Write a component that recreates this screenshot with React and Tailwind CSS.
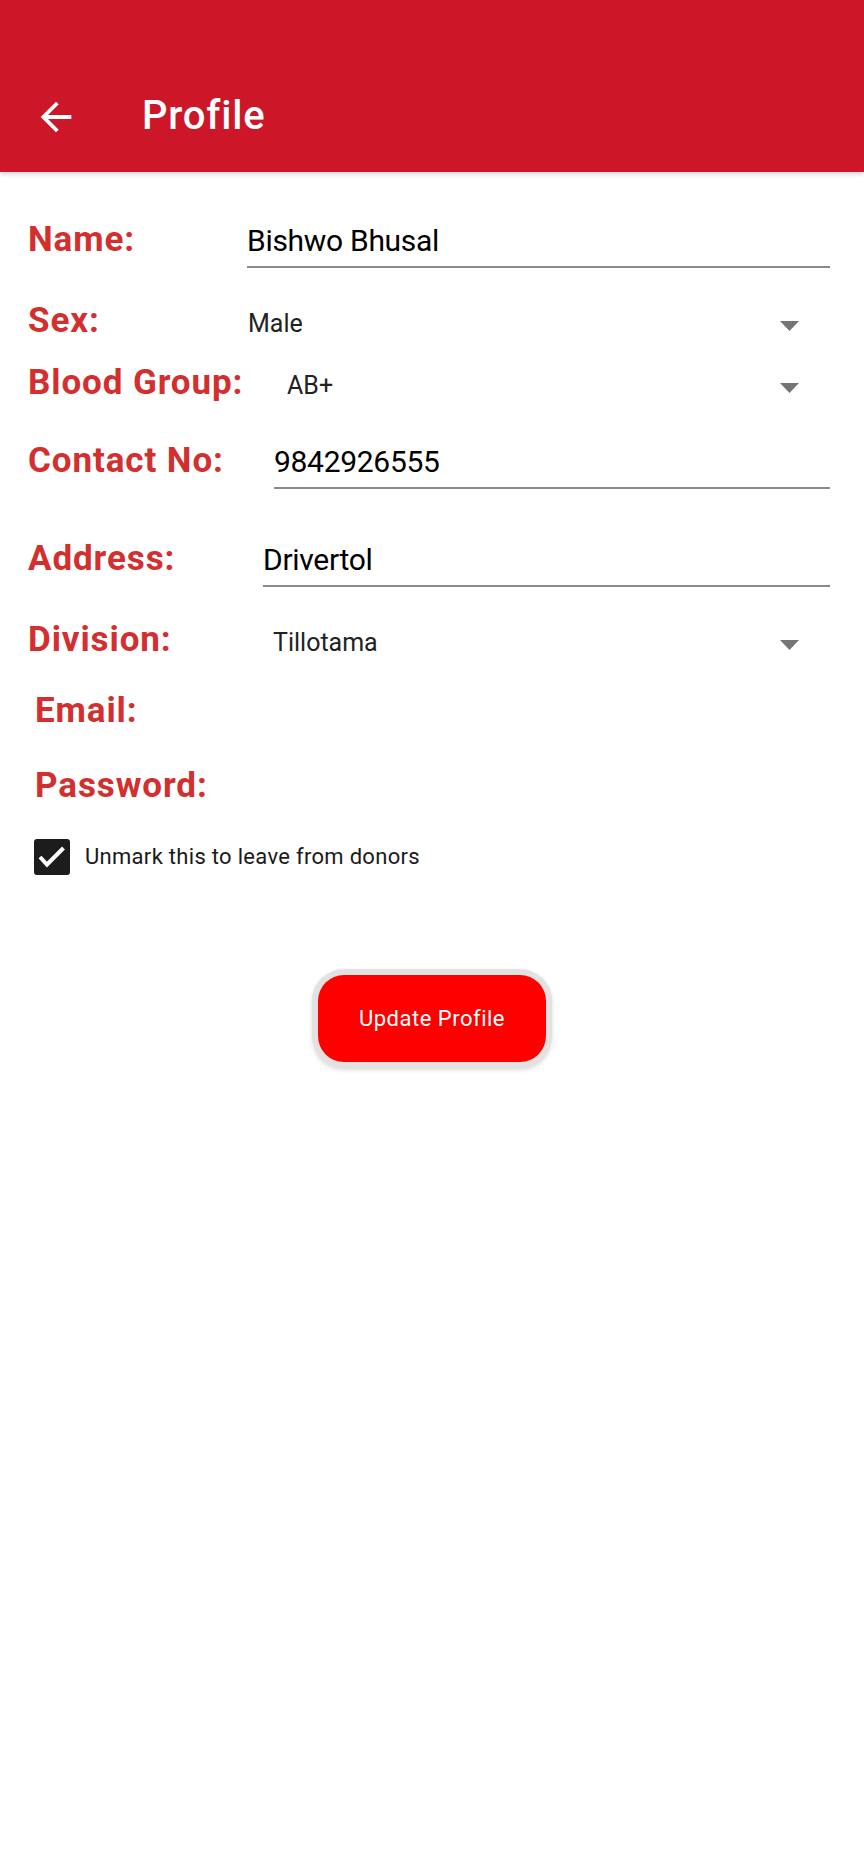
import React from 'react';

const font = { fontFamily: 'Roboto, "Noto Sans", sans-serif' };

function Caret() {
  return (
    <svg width="19" height="10" viewBox="0 0 19 10" className="shrink-0">
      <path d="M0 0 H19 L9.5 10 Z" fill="#757575" />
    </svg>
  );
}

function Label({ children, width, className = '' }) {
  return (
    <div
      className={`shrink-0 text-[35px] font-bold leading-[40px] tracking-[0.9px] text-[#d32f2f] ${className}`}
      style={width ? { width } : undefined}
    >
      {children}
    </div>
  );
}

// text field: black value with grey underline
function Field({ value }) {
  return (
    <div className="flex-1 border-b-2 border-[#8a8a8a] pb-[5px] text-[30px] leading-[40px] tracking-[-0.3px] text-black">
      {value}
    </div>
  );
}

// spinner: smaller dark value with a caret at the right
function Spinner({ value }) {
  return (
    <div className="flex flex-1 items-baseline text-[25px] leading-[30px] text-[#222]">
      <span className="flex-1">{value}</span>
      <span className="self-center mr-[31px] mt-[4px]">
        <Caret />
      </span>
    </div>
  );
}

export default function App() {
  return (
    <div className="min-h-[1872px] w-[864px] bg-white" style={font}>
      {/* toolbar */}
      <header className="flex h-[172px] items-start bg-[#cd1628] pl-[33px] pt-[94px] shadow-[0_2px_5px_rgba(0,0,0,0.18)]">
        <svg width="46" height="46" viewBox="0 0 24 24" fill="white">
          <path d="M20 11H7.83l5.59-5.59L12 4l-8 8 8 8 1.41-1.41L7.83 13H20v-2z" />
        </svg>
        <h1 className="ml-[63px] -mt-[1px] text-[40px] font-medium leading-[46px] tracking-[0.8px] text-white">Profile</h1>
      </header>

      <div className="pl-[28px] pr-[34px] pt-[48px]">
        <div className="flex h-[81px] items-baseline">
          <Label width="219px">Name:</Label>
          <Field value="Bishwo Bhusal" />
        </div>

        <div className="flex h-[62px] items-baseline">
          <Label width="220px">Sex:</Label>
          <Spinner value="Male" />
        </div>

        <div className="flex h-[78px] items-baseline">
          <Label width="259px">Blood Group:</Label>
          <Spinner value="AB+" />
        </div>

        <div className="flex h-[98px] items-baseline">
          <Label width="246px">Contact No:</Label>
          <Field value="9842926555" />
        </div>

        <div className="flex h-[81px] items-baseline">
          <Label width="235px">Address:</Label>
          <Field value="Drivertol" />
        </div>

        <div className="flex h-[71px] items-baseline">
          <Label width="245px">Division:</Label>
          <Spinner value="Tillotama" />
        </div>

        <div className="h-[75px] pl-[7px]">
          <Label>Email:</Label>
        </div>

        <div className="h-[73px] pl-[7px]">
          <Label>Password:</Label>
        </div>

        <label className="flex items-center pl-[6px]">
          <span className="flex h-[36px] w-[36px] items-center justify-center rounded-[3px] bg-[#1c1c1c]">
            <svg width="36" height="36" viewBox="0 0 36 36" fill="none">
              <path d="M6 18l7 7.5L29.5 9" stroke="white" strokeWidth="4" />
            </svg>
          </span>
          <span className="ml-[15px] text-[22px] leading-[30px] tracking-[0.3px] text-[#1a1a1a]">
            Unmark this to leave from donors
          </span>
        </label>
      </div>

      <div className="mt-[94px] flex justify-center">
        <button className="rounded-[32px] bg-[#e6e1e1] p-[6px] shadow-[0_2px_4px_rgba(0,0,0,0.15)]">
          <span className="flex h-[87px] w-[228px] items-center justify-center rounded-[26px] bg-[#ff0000] text-[22px] tracking-[0.5px] text-white">
            Update Profile
          </span>
        </button>
      </div>
    </div>
  );
}
